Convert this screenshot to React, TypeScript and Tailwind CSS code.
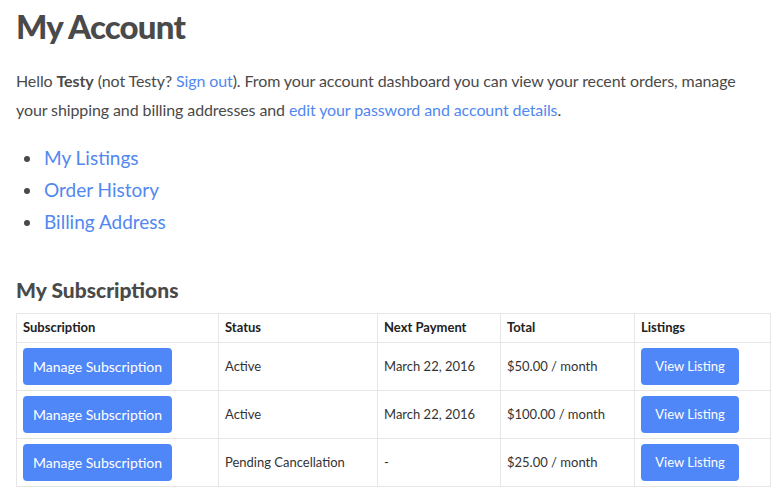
const rows = [
  { status: "Active", next: "March 22, 2016", total: "$50.00" },
  { status: "Active", next: "March 22, 2016", total: "$100.00" },
  { status: "Pending Cancellation", next: "-", total: "$25.00" },
];

export default function App() {
  return (
    <div className="bg-white w-[781px] h-[500px] overflow-hidden px-4 text-[#4a4a4a]" style={{ fontFamily: "Lato, sans-serif" }}>
      <h1 className="text-[33px] font-black pt-[4px] leading-[44px] tracking-tight">My Account</h1>
      <p className="mt-[18px] text-[16px] leading-[29px] tracking-[-0.1px]">
        Hello <b>Testy</b> (not Testy? <a className="text-[#5188f0]">Sign out</a>). From your account dashboard you can view your recent orders, manage
        your shipping and billing addresses and <a className="text-[#5188f0]">edit your password and account details</a>.
      </p>
      <ul className="mt-[18px] ml-[8px] list-disc list-inside text-[19px] leading-[32px] marker:text-[#4a4a4a]">
        <li><a className="text-[#5188f0] ml-[-6px]">My Listings</a></li>
        <li><a className="text-[#5188f0] ml-[-6px]">Order History</a></li>
        <li><a className="text-[#5188f0] ml-[-6px]">Billing Address</a></li>
      </ul>
      <h2 className="mt-[38px] text-[21px] font-black leading-[28px]">My Subscriptions</h2>
      <table className="mt-[9px] w-[755px] border-collapse text-[13px] table-fixed">
        <colgroup>
          <col className="w-[202px]" /><col className="w-[159px]" /><col className="w-[123px]" /><col className="w-[134px]" /><col />
        </colgroup>
        <thead>
          <tr className="h-[29px] text-left">
            {["Subscription", "Status", "Next Payment", "Total", "Listings"].map((h) => (
              <th key={h} className="border border-[#e6e6e6] px-[6px] font-bold text-[#222]">{h}</th>
            ))}
          </tr>
        </thead>
        <tbody>
          {rows.map((r, i) => (
            <tr key={i} className="h-[48px] text-[#333]">
              <td className="border border-[#e6e6e6] px-[6px]">
                <button className="bg-[#5087f8] text-white rounded-[4px] h-[37px] px-[10px] text-[14px]">Manage Subscription</button>
              </td>
              <td className="border border-[#e6e6e6] px-[6px]">{r.status}</td>
              <td className="border border-[#e6e6e6] px-[6px]">{r.next}</td>
              <td className="border border-[#e6e6e6] px-[6px]">{r.total} / month</td>
              <td className="border border-[#e6e6e6] px-[6px]">
                <button className="bg-[#5087f8] text-white rounded-[4px] h-[37px] w-[98px] text-[13px]">View Listing</button>
              </td>
            </tr>
          ))}
        </tbody>
      </table>
    </div>
  );
}
